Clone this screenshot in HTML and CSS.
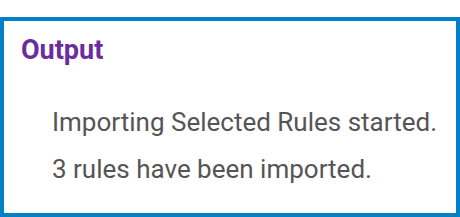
FILE: index.html
```html
<!DOCTYPE html>
<html lang="en">
<head>
    <meta charset="UTF-8">
    <title>Output</title>
    <link rel="stylesheet" href="styles.css">
</head>
<body>
<div class="panel">
    <h2 class="panel-title">Output</h2>
    <ul class="log">
        <li>Importing Selected Rules started.</li>
        <li>3 rules have been imported.</li>
    </ul>
</div>
</body>
</html>
```

FILE: styles.css
```css
*{
    margin: 0;
    padding: 0;
    box-sizing: border-box;
}
body{
    width: 460px;
    height: 217px;
    padding-top: 17px;
    background: #fff;
    font-family: Roboto, "Liberation Sans", sans-serif;
}
.panel{
    height: 200px;
    border: 4px solid #0080c6;
    padding: 14px 0 0 17px;
    overflow: hidden;
}
.panel-title{
    font-size: 27px;
    font-weight: bold;
    color: #6b2c9e;
    line-height: 30px;
}
.log{
    list-style: none;
    margin-top: 34px;
    padding-left: 31px;
}
.log li{
    font-size: 26px;
    line-height: 47px;
    color: #555;
    white-space: nowrap;
}
```
